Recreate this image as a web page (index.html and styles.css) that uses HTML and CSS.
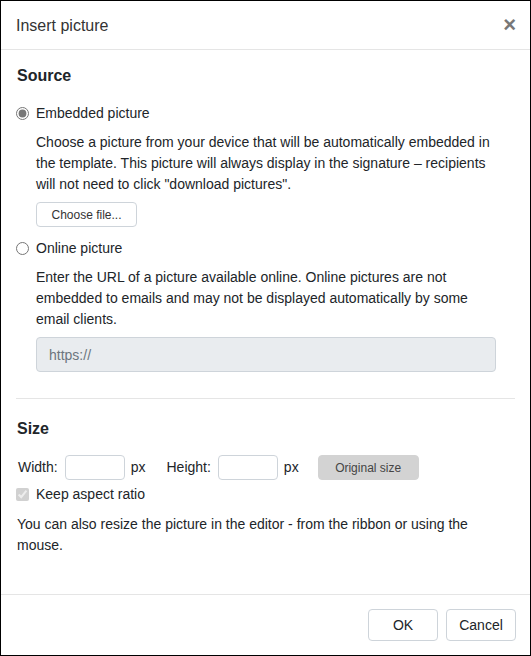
FILE: index.html
```html
<!DOCTYPE html>
<html lang="en">
<head>
    <meta charset="utf-8" />
    <title>Insert picture</title>
    <link rel="stylesheet" href="styles.css">
</head>
<body>
    <div class="dialog">
        <div class="dialog-header">
            <h4 class="dialog-title">Insert picture</h4>
            <span class="close">&times;</span>
        </div>
        <div class="dialog-body">
            <h5 class="section-title">Source</h5>
            <label class="option">
                <input type="radio" name="source" checked />Embedded picture
            </label>
            <div class="option-body">
                <p>Choose a picture from your device that will be automatically embedded in the template. This picture will always display in the signature – recipients will not need to click "download pictures".</p>
                <button class="btn btn-file">Choose file...</button>
            </div>
            <label class="option">
                <input type="radio" name="source" />Online picture
            </label>
            <div class="option-body">
                <p>Enter the URL of a picture available online. Online pictures are not embedded to emails and may not be displayed automatically by some email clients.</p>
                <input type="text" class="url-input" placeholder="https://" disabled />
            </div>
            <hr class="divider" />
            <h5 class="section-title size-title">Size</h5>
            <div class="size-row">
                <span class="size-label">Width:</span>
                <input type="text" class="size-input" />
                <span class="unit">px</span>
                <span class="size-label">Height:</span>
                <input type="text" class="size-input" />
                <span class="unit unit-last">px</span>
                <button class="btn btn-original" disabled>Original size</button>
            </div>
            <label class="option keep">
                <input type="checkbox" checked disabled />Keep aspect ratio
            </label>
            <p class="hint">You can also resize the picture in the editor - from the ribbon or using the mouse.</p>
        </div>
        <div class="dialog-footer">
            <button class="btn btn-footer">OK</button>
            <button class="btn btn-footer">Cancel</button>
        </div>
    </div>
</body>
</html>
```

FILE: styles.css
```css
html, body {
    margin: 0;
    padding: 0;
    background: #fff;
}
body {
    font-family: "Liberation Sans", Arial, sans-serif;
    font-size: 14px;
    line-height: 21px;
    color: #212529;
}
h4, h5, p {
    margin: 0;
}
.dialog {
    width: 531px;
    height: 656px;
    box-sizing: border-box;
    border: 1px solid #000;
    display: flex;
    flex-direction: column;
}
.dialog-header {
    height: 48px;
    border-bottom: 1px solid #e5e5e5;
    display: flex;
    align-items: center;
    justify-content: space-between;
    padding: 0 14px 0 15px;
}
.dialog-title {
    font-size: 16px;
    font-weight: normal;
    color: #333;
}
.close {
    font-size: 22px;
    font-weight: bold;
    color: #777;
    line-height: 1;
    cursor: pointer;
}
.dialog-body {
    flex: 1;
    padding: 16px 15px 0 15px;
}
.section-title {
    font-size: 16px;
    font-weight: bold;
    line-height: 20px;
    margin: 0 0 17px 1px;
}
.option {
    display: flex;
    align-items: center;
    gap: 7px;
    line-height: 21px;
}
.option input {
    margin: 0;
    width: 13px;
    height: 13px;
    accent-color: #777;
}
.option-body {
    padding: 8px 20px 11px 20px;
}
.option-body p {
    margin-bottom: 7px;
}
.btn {
    font-family: inherit;
    background: #fff;
    border: 1px solid #ced4da;
    border-radius: 4px;
    color: #333;
    cursor: pointer;
}
.btn-file {
    font-size: 12px;
    width: 101px;
    height: 25px;
    padding: 0;
}
.url-input {
    display: block;
    width: 460px;
    height: 35px;
    box-sizing: border-box;
    border: 1px solid #ced4da;
    border-radius: 4px;
    background: #e9ecef;
    font-family: inherit;
    font-size: 14px;
    padding: 0 12px;
    margin-top: 2px;
}
.url-input::placeholder {
    color: #6c757d;
}
.divider {
    border: 0;
    border-top: 1px solid #e5e5e5;
    margin: 15px 0 20px 0;
}
.size-title {
    margin-bottom: 16px;
}
.size-row {
    display: flex;
    align-items: center;
    height: 25px;
    padding-left: 2px;
}
.size-label {
    margin-right: 7px;
}
.size-input {
    width: 60px;
    height: 25px;
    box-sizing: border-box;
    border: 1px solid #ced4da;
    border-radius: 4px;
    margin: 0 6px 0 0;
    font-family: inherit;
}
.unit {
    margin-right: 21px;
}
.unit-last {
    margin-right: 19px;
}
.btn-original {
    font-size: 12px;
    width: 101px;
    height: 25px;
    padding: 0;
    background: #d3d3d3;
    border-color: #d3d3d3;
    color: #444;
}
.keep {
    margin-top: 4px;
}
.hint {
    margin-top: 9px;
    padding-left: 1px;
}
.dialog-footer {
    border-top: 1px solid #e5e5e5;
    height: 60px;
    display: flex;
    justify-content: flex-end;
    align-items: center;
    gap: 8px;
    padding: 0 14px;
}
.btn-footer {
    width: 70px;
    height: 32px;
    font-size: 14px;
    color: #212529;
}
```
